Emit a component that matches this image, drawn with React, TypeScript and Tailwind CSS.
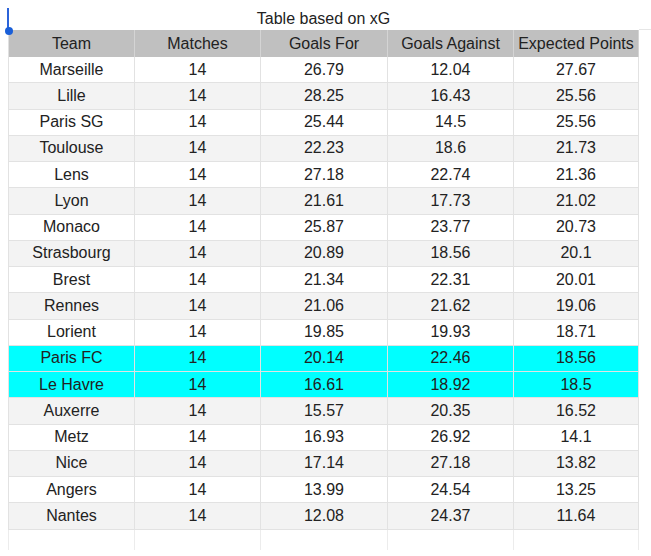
import React from 'react';

interface TeamRow {
  team: string;
  matches: number;
  goalsFor: string;
  goalsAgainst: string;
  points: string;
  highlight?: boolean;
}

const rows: TeamRow[] = [
  { team: 'Marseille', matches: 14, goalsFor: '26.79', goalsAgainst: '12.04', points: '27.67' },
  { team: 'Lille', matches: 14, goalsFor: '28.25', goalsAgainst: '16.43', points: '25.56' },
  { team: 'Paris SG', matches: 14, goalsFor: '25.44', goalsAgainst: '14.5', points: '25.56' },
  { team: 'Toulouse', matches: 14, goalsFor: '22.23', goalsAgainst: '18.6', points: '21.73' },
  { team: 'Lens', matches: 14, goalsFor: '27.18', goalsAgainst: '22.74', points: '21.36' },
  { team: 'Lyon', matches: 14, goalsFor: '21.61', goalsAgainst: '17.73', points: '21.02' },
  { team: 'Monaco', matches: 14, goalsFor: '25.87', goalsAgainst: '23.77', points: '20.73' },
  { team: 'Strasbourg', matches: 14, goalsFor: '20.89', goalsAgainst: '18.56', points: '20.1' },
  { team: 'Brest', matches: 14, goalsFor: '21.34', goalsAgainst: '22.31', points: '20.01' },
  { team: 'Rennes', matches: 14, goalsFor: '21.06', goalsAgainst: '21.62', points: '19.06' },
  { team: 'Lorient', matches: 14, goalsFor: '19.85', goalsAgainst: '19.93', points: '18.71' },
  { team: 'Paris FC', matches: 14, goalsFor: '20.14', goalsAgainst: '22.46', points: '18.56', highlight: true },
  { team: 'Le Havre', matches: 14, goalsFor: '16.61', goalsAgainst: '18.92', points: '18.5', highlight: true },
  { team: 'Auxerre', matches: 14, goalsFor: '15.57', goalsAgainst: '20.35', points: '16.52' },
  { team: 'Metz', matches: 14, goalsFor: '16.93', goalsAgainst: '26.92', points: '14.1' },
  { team: 'Nice', matches: 14, goalsFor: '17.14', goalsAgainst: '27.18', points: '13.82' },
  { team: 'Angers', matches: 14, goalsFor: '13.99', goalsAgainst: '24.54', points: '13.25' },
  { team: 'Nantes', matches: 14, goalsFor: '12.08', goalsAgainst: '24.37', points: '11.64' },
];

const headers = ['Team', 'Matches', 'Goals For', 'Goals Against', 'Expected Points'];
const cols = 'grid grid-cols-[126px_126px_127px_126px_125px]';

export default function App() {
  return (
    <div className="relative w-[651px] h-[556px] bg-white overflow-hidden text-[16px] text-[#222] font-['Liberation_Sans',Arial,sans-serif]">
      {/* selection handle */}
      <div className="absolute left-[7px] top-[8px] w-[2px] h-[22px] bg-[#2b63d9]" />
      <div className="absolute left-[5px] top-[27px] w-[8px] h-[8px] rounded-full bg-[#1a5fd8]" />

      <div className="flex pl-[8px]">
        <div className="w-[631px]">
          <div className="h-[30px] flex items-end justify-center pb-[3px] leading-none">
            Table based on xG
          </div>

          <div className={`${cols} h-[27px] bg-[#c0c0c0] border-l border-[#e0e0e0]`}>
            {headers.map((h) => (
              <div key={h} className="flex items-center justify-center border-r border-[#d4d4d4] whitespace-nowrap">
                {h}
              </div>
            ))}
          </div>

          {rows.map((r, i) => {
            const bg = r.highlight ? 'bg-[#00ffff]' : i % 2 === 1 ? 'bg-[#f3f3f3]' : 'bg-white';
            return (
              <div key={r.team} className={`${cols} h-[26.25px] ${bg} border-l border-[#e2e2e2]`}>
                {[r.team, r.matches, r.goalsFor, r.goalsAgainst, r.points].map((v, j) => (
                  <div
                    key={j}
                    className="flex items-center justify-center border-r border-b border-[#e2e2e2] whitespace-nowrap"
                  >
                    {v}
                  </div>
                ))}
              </div>
            );
          })}

          <div className={`${cols} h-[20px] border-l border-[#ececec]`}>
            {headers.map((h) => (
              <div key={h} className="border-r border-[#ececec]" />
            ))}
          </div>
        </div>
        <div className="flex-1 h-[556px]">
          <div className="h-[30px] border-b border-[#e6e6e6]" />
        </div>
      </div>
    </div>
  );
}
